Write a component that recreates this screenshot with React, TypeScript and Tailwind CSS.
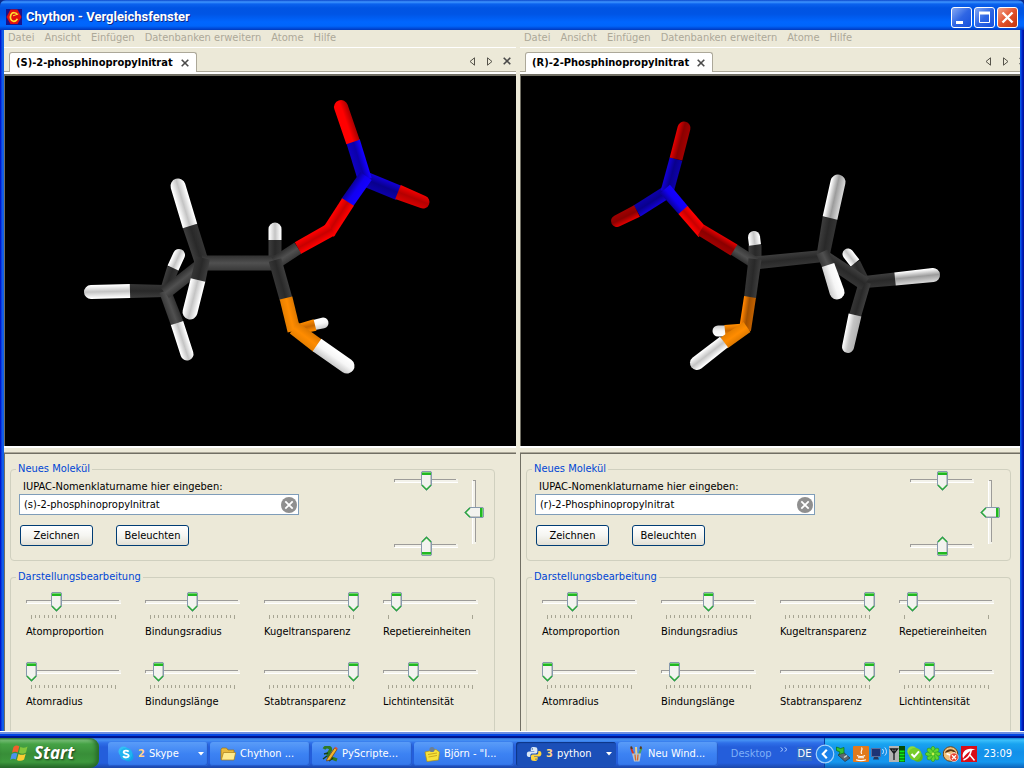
import { useId, useState } from 'react';
import type { ReactNode } from 'react';

/* ---------- Molecule rendering ---------- */

type Shade = [string, string, string];

const SHADES: Record<string, Shade> = {
  carbon: ['#333333', '#505050', '#3a3a3a'],
  carbonDark: ['#3c3c3c', '#292929', '#343434'],
  white: ['#ffffff', '#c4c4c4', '#ffffff'],
  whiteSoft: ['#ffffff', '#f6f6f6', '#cfcfcf'],
  whiteDim: ['#ffffff', '#9c9c9c', '#d4d4d4'],
  whiteDimFlip: ['#b4b4b4', '#c4c4c4', '#ffffff'],
  red: ['#ff0000', '#ff0000', '#b00000'],
  redDark: ['#e00000', '#8a0000', '#a00000'],
  redCore: ['#ff0000', '#c80000', '#ff0000'],
  redSide: ['#f00000', '#b40000', '#d80000'],
  blue: ['#1400ff', '#1200f0', '#0b00a0'],
  blueDark: ['#1200d0', '#09008c', '#0c00a8'],
  blueCore: ['#0e00c0', '#0b00a8', '#1400ff'],
  orange: ['#ff8c00', '#c86800', '#ff8c00'],
  orangeDark: ['#ff8400', '#a05000', '#c06000'],
  orangeLit: ['#e07a00', '#ff8c00', '#e88000'],
};

// x1, y1, x2, y2, width at start, width at end, shade, rounded end
type Stick = [number, number, number, number, number, number, string, boolean?];

const LEFT_STICKS: Stick[] = [
  [165, 291, 173, 268, 10, 12, 'carbonDark'],
  [173, 268, 179, 255, 12, 12, 'white', true],
  [314, 325, 323, 323, 10, 11, 'whiteSoft', true],
  [295, 330, 315, 325, 10, 12, 'orange'],
  [275, 263, 275, 240, 13, 13, 'carbonDark'],
  [275, 240, 275, 229, 13, 13, 'white', true],
  [165, 291, 130, 291, 12, 14, 'carbonDark'],
  [130, 291, 91, 292, 14, 14, 'white', true],
  [165, 291, 177, 323, 12, 13, 'carbon'],
  [177, 323, 187, 354, 13, 13, 'white', true],
  [165, 293, 202, 264, 13, 13, 'carbon'],
  [202, 263, 190, 226, 14, 15, 'carbonDark'],
  [190, 226, 178, 186, 15, 15, 'white', true],
  [202, 263, 275, 263, 15, 15, 'carbon'],
  [203, 258, 198, 281, 14, 15, 'carbonDark'],
  [198, 280, 190, 312, 15, 15, 'white', true],
  [275, 263, 298, 248, 13, 13, 'carbon'],
  [275, 260, 286, 299, 13, 13, 'carbonDark'],
  [286, 298, 294, 331, 13, 13, 'orangeLit'],
  [294, 328, 318, 346, 14, 15, 'orangeLit'],
  [317, 345, 347, 366, 15, 15, 'whiteSoft', true],
  [365, 179, 399, 193, 15, 15, 'blueDark'],
  [398, 192, 423, 202, 15, 13, 'redSide', true],
  [365, 180, 353, 141, 14, 14, 'blueCore'],
  [353, 142, 341, 107, 14, 14, 'red', true],
  [366, 176, 347, 203, 14, 14, 'blue'],
  [348, 202, 328, 233, 14, 14, 'redCore'],
  [332, 229, 298, 248, 14, 13, 'redCore'],
];

const RIGHT_STICKS: Stick[] = [
  [865, 282, 855, 263, 10, 11, 'carbonDark'],
  [855, 263, 848, 254, 11, 11, 'white', true],
  [733, 331, 718, 331, 11, 11, 'whiteSoft', true],
  [745, 329, 725, 331, 11, 12, 'orange'],
  [755, 263, 755, 245, 13, 13, 'carbonDark'],
  [755, 245, 754, 237, 12, 12, 'white', true],
  [865, 282, 895, 279, 12, 13, 'carbonDark'],
  [895, 279, 933, 275, 13, 14, 'whiteDim', true],
  [865, 282, 855, 316, 12, 12, 'carbonDark'],
  [855, 315, 848, 347, 13, 12, 'whiteDimFlip', true],
  [823, 256, 865, 284, 13, 14, 'carbonDark'],
  [755, 263, 823, 256, 13, 12, 'carbonDark'],
  [823, 256, 830, 218, 13, 15, 'carbonDark'],
  [830, 218, 838, 182, 15, 15, 'whiteDim', true],
  [822, 252, 829, 267, 12, 13, 'carbon'],
  [828, 265, 837, 292, 13, 15, 'whiteSoft', true],
  [755, 263, 733, 249, 12, 12, 'carbon'],
  [755, 259, 750, 298, 13, 12, 'carbonDark'],
  [745, 330, 750, 297, 12, 12, 'orangeDark'],
  [747, 327, 724, 343, 12, 13, 'orangeLit'],
  [724, 342, 697, 363, 13, 14, 'white', true],
  [667, 192, 637, 211, 13, 13, 'blueDark'],
  [637, 211, 617, 221, 13, 12, 'redDark', true],
  [667, 192, 676, 159, 13, 13, 'blueDark'],
  [676, 159, 684, 128, 13, 13, 'redDark', true],
  [665, 189, 684, 211, 13, 12, 'blue'],
  [683, 210, 703, 233, 12, 12, 'redCore'],
  [701, 230, 734, 250, 12, 13, 'redDark'],
];

function Molecule({ sticks, originX, label }: { sticks: Stick[]; originX: number; label: string }) {
  const uid = useId();
  return (
    <svg viewBox={`${originX} 76 512 370`} width="512" height="370" role="img" aria-label={label} className="block shrink-0">
      <defs>
        {Object.entries(SHADES).map(([name, [a, b, c]]) => (
          <linearGradient key={name} id={`${uid}${name}`} x1="0" y1="0" x2="0" y2="1">
            <stop offset="0.05" stopColor={a} />
            <stop offset="0.5" stopColor={b} />
            <stop offset="0.95" stopColor={c} />
          </linearGradient>
        ))}
      </defs>
      {sticks.map(([x1, y1, x2, y2, w1, w2, shade, round], i) => {
        const len = Math.hypot(x2 - x1, y2 - y1);
        const angle = (Math.atan2(y2 - y1, x2 - x1) * 180) / Math.PI;
        const r1 = w1 / 2;
        const r2 = w2 / 2;
        const end = round ? `A${r2} ${r2} 0 0 1 ${len} ${r2}` : `L${len} ${r2}`;
        return (
          <path
            key={i}
            transform={`translate(${x1} ${y1}) rotate(${angle})`}
            d={`M0 ${-r1}L${len} ${-r2}${end}L0 ${r1}Z`}
            fill={`url(#${uid}${shade})`}
          />
        );
      })}
    </svg>
  );
}

/* ---------- Sliders ---------- */

type Direction = 'down' | 'up' | 'left';

function SliderArt({ length, ratio, direction }: { length: number; ratio: number; direction: Direction }) {
  const x = Math.round(ratio * (length - 11));
  const vertical = direction === 'left';
  return (
    <svg
      width={vertical ? 20 : length}
      height={vertical ? length : 20}
      className="col-start-1 row-start-1 block"
      aria-hidden="true"
      shapeRendering="crispEdges"
    >
      <g transform={vertical ? 'translate(20 0) rotate(90)' : undefined}>
        <rect x="0" y="8" width={length} height="4" fill="#f3f2ea" />
        <rect x="0" y="8" width={length - 2} height="1" fill="#9d9c99" />
        <rect x="0" y="9" width="1" height="2" fill="#9d9c99" />
        <rect x="1" y="11" width={length - 1} height="1" fill="#ffffff" />
        <g transform={direction === 'up' ? `translate(${x} 20) scale(1 -1)` : `translate(${x} 0)`} shapeRendering="auto">
          <path d="M1 0.5H10L10.5 1V14.5L5.5 19.5L0.5 14.5V1Z" fill="#f3f3ef" stroke="#8799ad" />
          <path d="M9.5 3V14.5L5.5 18.5" fill="none" stroke="#c3c6c4" />
          <path d="M1 1H10V4H1Z" fill="#21b821" />
          <path d="M1 1H10V2H1Z" fill="#6fd46a" />
          <path d="M1 14L5.5 18.5L10 14" fill="none" stroke="#2fae3c" strokeWidth="1.4" />
        </g>
      </g>
    </svg>
  );
}

function Slider({
  id,
  name,
  length,
  initial,
  direction = 'down',
}: {
  id?: string;
  name?: string;
  length: number;
  initial: number;
  direction?: Direction;
}) {
  const [value, setValue] = useState(initial);
  return (
    <div className="grid w-fit">
      <SliderArt length={length} ratio={value / 20} direction={direction} />
      <input
        id={id}
        aria-label={name}
        type="range"
        min={0}
        max={20}
        value={value}
        onChange={(e) => setValue(Number(e.target.value))}
        className={
          direction === 'left'
            ? 'col-start-1 row-start-1 m-0 h-16 w-5 cursor-pointer opacity-0 [writing-mode:vertical-lr]'
            : 'col-start-1 row-start-1 m-0 h-5 w-0 min-w-full cursor-pointer opacity-0'
        }
      />
    </div>
  );
}

function LabelledSlider({ label, value, sparse }: { label: string; value: number; sparse?: boolean }) {
  const id = useId();
  const ticks = Array.from({ length: 21 }, (_, i) => i).filter((i) => !sparse || i % 20 === 0);
  return (
    <div className="w-[95px]">
      <Slider id={id} length={95} initial={value} />
      <svg width="95" height="4" className="mt-[3px] block" shapeRendering="crispEdges" aria-hidden="true">
        {ticks.map((i) => (
          <rect key={i} x={5 + Math.round(i * 4.2)} y="0" width="1" height={i % 20 === 0 ? 4 : 3} fill="#a7a593" />
        ))}
      </svg>
      <label htmlFor={id} className="mt-1.5 block leading-[14px] whitespace-nowrap">
        {label}
      </label>
    </div>
  );
}

/* ---------- Comparison pane ---------- */

const MENU = ['Datei', 'Ansicht', 'Einfügen', 'Datenbanken erweitern', 'Atome', 'Hilfe'];

const SETTINGS = [
  { label: 'Atomproportion', value: 6 },
  { label: 'Bindungsradius', value: 10 },
  { label: 'Kugeltransparenz', value: 20 },
  { label: 'Repetiereinheiten', value: 2, sparse: true },
  { label: 'Atomradius', value: 0 },
  { label: 'Bindungslänge', value: 2 },
  { label: 'Stabtransparenz', value: 20 },
  { label: 'Lichtintensität', value: 6 },
];

function Cross() {
  return (
    <svg width="8" height="8" viewBox="0 0 8 8" className="block" aria-hidden="true">
      <path d="M0.7 0.7L7.3 7.3M7.3 0.7L0.7 7.3" stroke="#4a4a4a" strokeWidth="1.6" />
    </svg>
  );
}

function PushButton({ children }: { children: ReactNode }) {
  return (
    <button
      type="button"
      className="h-[21px] w-[73px] rounded-[3px] border border-[#003c74] bg-linear-to-b from-white via-[#f5f5f1] to-[#e3e0d5] leading-[14px]"
    >
      {children}
    </button>
  );
}

function Pane({ title, query, sticks, originX }: { title: string; query: string; sticks: Stick[]; originX: number }) {
  const inputId = useId();
  const [text, setText] = useState(query);
  return (
    <section className="flex grow flex-col">
      <nav className="flex h-[18px] items-start gap-2.5 border-b border-white pt-px pl-1 leading-[14px] text-[#aca899]">
        {MENU.map((item) => (
          <button key={item} type="button" className="whitespace-nowrap">
            {item}
          </button>
        ))}
      </nav>

      <div className="flex h-6 shrink-0 items-end border-b border-[#aca899] pt-1 pl-[5px]">
        <div className="-mb-px flex h-5 items-center gap-2 rounded-t-[3px] border border-b-0 border-[#aca899] bg-white pr-[7px] pl-1.5">
          <button type="button" className="font-bold leading-[14px] whitespace-nowrap">
            {title}
          </button>
          <button type="button" aria-label="Tab schließen">
            <Cross />
          </button>
        </div>
        <div className="mb-1 ml-auto flex h-3 items-center gap-2.5 pr-1.5">
          <button type="button" aria-label="Vorheriger Tab">
            <svg width="7" height="9" viewBox="0 0 7 9" className="block">
              <path d="M5.5 0.8V8.2L1 4.5Z" fill="none" stroke="#55534a" />
            </svg>
          </button>
          <button type="button" aria-label="Nächster Tab">
            <svg width="7" height="9" viewBox="0 0 7 9" className="block">
              <path d="M1.5 0.8V8.2L6 4.5Z" fill="none" stroke="#55534a" />
            </svg>
          </button>
          <button type="button" aria-label="Schließen">
            <Cross />
          </button>
        </div>
      </div>

      <div className="flex grow flex-col border-y-2 border-white">
        <div className="flex min-h-[372px] grow items-center overflow-hidden border-t-2 border-l border-[#716f64] bg-black">
          <Molecule sticks={sticks} originX={originX} label={title} />
        </div>
      </div>

      <div className="mt-1 border-t border-[#aca899]">
        <div className="border-t border-l border-[#716f64] pt-2 pr-[22px] pl-[5px]">
          <fieldset className="rounded-[4px] border border-[#d0d0bf] pr-2.5 pb-3.5 pl-2">
            <legend className="-ml-[3px] px-0.5 leading-[14px] text-[#0046d5]">Neues Molekül</legend>
            <div className="flex justify-between">
              <div className="w-[280px]">
                <label htmlFor={inputId} className="block pt-1 pl-1 leading-[14px]">
                  IUPAC-Nomenklaturname hier eingeben:
                </label>
                <div className="flex h-[21px] items-center border border-[#7f9db9] bg-white pr-px pl-1">
                  <input
                    id={inputId}
                    value={text}
                    onChange={(e) => setText(e.target.value)}
                    className="min-w-0 grow bg-transparent leading-[14px] outline-none"
                  />
                  <button type="button" aria-label="Eingabe löschen" onClick={() => setText('')}>
                    <svg width="16" height="16" viewBox="0 0 16 16" className="block">
                      <circle cx="8" cy="8" r="8" fill="#8f8f8f" />
                      <path d="M4.3 4.3L11.7 11.7M11.7 4.3L4.3 11.7" stroke="#fff" strokeWidth="1.8" />
                    </svg>
                  </button>
                </div>
                <div className="mt-2.5 flex gap-[23px] pl-px">
                  <PushButton>Zeichnen</PushButton>
                  <PushButton>Beleuchten</PushButton>
                </div>
              </div>
              <div className="-mt-[5px] -mb-2.5 flex gap-1.5">
                <div className="flex flex-col gap-[45px]">
                  <Slider name="Drehung oben" length={64} initial={10} />
                  <Slider name="Drehung unten" length={64} initial={10} direction="up" />
                </div>
                <div className="pt-[9px]">
                  <Slider name="Neigung" length={64} initial={10} direction="left" />
                </div>
              </div>
            </div>
          </fieldset>

          <fieldset className="mt-[9px] rounded-t-[4px] border border-b-0 border-[#d0d0bf] px-[15px] pb-[22px]">
            <legend className="-ml-2.5 px-0.5 leading-[14px] text-[#0046d5]">Darstellungsbearbeitung</legend>
            <div className="grid w-fit grid-cols-4 gap-x-6 gap-y-[23px] pt-2">
              {SETTINGS.map((s) => (
                <LabelledSlider key={s.label} label={s.label} value={s.value} sparse={s.sparse} />
              ))}
            </div>
          </fieldset>
        </div>
      </div>
    </section>
  );
}

/* ---------- Window frame ---------- */

function TitleButton({ label, danger, children }: { label: string; danger?: boolean; children: ReactNode }) {
  return (
    <button
      type="button"
      aria-label={label}
      className={
        danger
          ? 'size-[21px] rounded-[3px] border border-white bg-linear-to-br from-[#f0a088] via-[#e3522b] to-[#bf3409]'
          : 'size-[21px] rounded-[3px] border border-white bg-linear-to-br from-[#86a8f2] via-[#2f66e4] to-[#1650dc]'
      }
    >
      <svg width="19" height="19" viewBox="0 0 19 19" fill="none" stroke="#fff" className="block">
        {children}
      </svg>
    </button>
  );
}

function TitleBar() {
  return (
    <header className="flex h-[30px] shrink-0 items-center rounded-t-[6px] bg-[linear-gradient(#0a47cc_0px,#3f96ff_2px,#0b62ee_4px,#0054e3_8px,#0055e5_14px,#0066ff_22px,#0065fb_26px,#0043cf_29px,#0038b8_30px)] px-1.5 pt-1">
      <svg width="16" height="16" viewBox="0 0 16 16" className="mr-1 shrink-0" aria-hidden="true">
        <rect width="16" height="16" fill="#18128c" />
        <path d="M4.5 0.5L11.5 0.5L15.5 8L11.5 15L4.5 15L0.5 8Z" fill="#e01010" />
        <path d="M11.2 5.6C10 3.2 6.4 3 5 5.6C3.6 8.6 4.7 12 7.6 12.3C9.4 12.4 10.7 11.5 11.3 9.8" fill="none" stroke="#ffe030" strokeWidth="1.7" />
        <path d="M7 6.8L12.3 5" stroke="#ffe030" />
      </svg>
      <h1 className="grow font-['Roboto',sans-serif] text-[13px] leading-4 font-bold text-white [text-shadow:1px_1px_#0a2a8c]">
        Chython - Vergleichsfenster
      </h1>
      <div className="flex gap-0.5">
        <TitleButton label="Minimieren">
          <path d="M4 14.5H11" strokeWidth="3" />
        </TitleButton>
        <TitleButton label="Maximieren">
          <path d="M4.5 5V14.5H14.5V5" />
          <path d="M4 5H15" strokeWidth="3" />
        </TitleButton>
        <TitleButton label="Fenster schließen" danger>
          <path d="M4.5 4.5L14.5 14.5M14.5 4.5L4.5 14.5" strokeWidth="2.4" />
        </TitleButton>
      </div>
    </header>
  );
}

/* ---------- Taskbar ---------- */

const icons = {
  skype: (
    <>
      <circle cx="5.5" cy="5.5" r="5" fill="#35c0f5" />
      <circle cx="10.5" cy="10.5" r="5" fill="#12a5e8" />
      <circle cx="8" cy="8" r="6.3" fill="#20b4f0" />
      <path d="M10.7 5.7C9.5 4.3 5.8 4.2 5.6 6.1C5.4 8.2 10.8 7.4 10.7 9.8C10.6 12 6.2 12 5.2 10" fill="none" stroke="#fff" strokeWidth="1.8" />
    </>
  ),
  folder: (
    <>
      <path d="M1 3.5L2 2H6.5L8 4H14V13.5H1Z" fill="#e8b93c" stroke="#9b7415" strokeWidth="0.7" />
      <path d="M3.5 6.5H15.7L14 14H1.3Z" fill="#ffeb8c" stroke="#a67c18" strokeWidth="0.7" />
    </>
  ),
  lizard: (
    <>
      <path d="M2 3C4-0.5 9 1 8.5 4L6 8L7 11L15 14" fill="none" stroke="#2f7a24" strokeWidth="3.2" />
      <path d="M1 13L5 10M2 8L6 7M7 15L11 12" stroke="#173f16" strokeWidth="1.5" />
      <path d="M5 13L12.5 2L15 3.5L8 14L4.5 15Z" fill="#f4b32c" stroke="#6b3c06" strokeWidth="0.7" />
      <path d="M12.5 2L13.5 0.7L15.8 2.2L15 3.5Z" fill="#e05040" />
    </>
  ),
  note: (
    <>
      <path d="M1 6L12 3.5L15.5 6L14.5 14L3 15.5Z" fill="#f7e23c" stroke="#b08f10" strokeWidth="0.7" />
      <path d="M4 8.5L13 7M4.5 11L13 9.5" stroke="#cda91a" />
      <circle cx="8" cy="3.5" r="2.6" fill="#6c8094" />
    </>
  ),
  python: (
    <>
      <path d="M7.8 1C4.8 1 4.8 2.5 4.8 3.7V5H8.3V5.6H3.2C1.4 5.6 0.8 7 0.8 8.3C0.8 10 1.5 11 3 11H4.3V9.3C4.3 8 5.3 7.4 6.4 7.4H9.7C10.8 7.4 11.4 6.5 11.4 5.6V3.5C11.4 1.8 10.5 1 7.8 1Z" fill="#dbe8f5" />
      <circle cx="6.3" cy="2.9" r="0.7" fill="#1d4b94" />
      <path d="M8.6 15C11.6 15 11.6 13.5 11.6 12.3V11H8.1V10.4H13.1C14.8 10.4 15.4 9 15.4 7.7C15.4 6 14.7 5 13.3 5H12.3V6.7C12.3 8 11.3 8.6 10.2 8.6H6.7C5.6 8.6 5 9.5 5 10.4V12.5C5 14.2 5.9 15 8.6 15Z" fill="#ffd43b" />
      <circle cx="10" cy="13.1" r="0.7" fill="#1d4b94" />
    </>
  ),
  brushes: (
    <>
      <path d="M3 2L6.5 11" stroke="#d33a22" strokeWidth="2" />
      <path d="M8 1L8.5 11" stroke="#e9d089" strokeWidth="2" />
      <path d="M13.5 2L10 11" stroke="#4ca24e" strokeWidth="2" />
      <path d="M3 0.5L4 3M13 0.5L12.5 3" stroke="#5b3a1e" strokeWidth="2" />
      <path d="M4 7.5H13L11.5 15.5H6Z" fill="#b6c3cf" />
      <path d="M7 8.5L7.7 14.5M10 8.5L9.5 14.5" stroke="#d96a24" strokeWidth="1.3" />
    </>
  ),
};

function TaskButton({ icon, count, label, active, menu }: { icon: ReactNode; count?: string; label: string; active?: boolean; menu?: boolean }) {
  return (
    <button
      type="button"
      className={
        active
          ? 'flex h-6 min-w-0 flex-[0_1_100px] items-center rounded-[3px] bg-[#1b4fb8] pr-1 pl-2.5 text-white shadow-[inset_1px_1px_1px_#0d3585]'
          : 'flex h-6 min-w-0 flex-[0_1_100px] items-center rounded-[3px] bg-linear-to-b from-[#5a9cf8] via-[#3c82f3] to-[#3477ea] pr-1 pl-2.5 text-white shadow-[inset_-1px_-1px_1px_#2458c8]'
      }
    >
      <svg width="16" height="16" viewBox="0 0 16 16" className="mr-1 shrink-0" aria-hidden="true">
        {icon}
      </svg>
      {count && <span className="mr-1 font-bold text-[#ffd28a]">{count}</span>}
      <span className="whitespace-nowrap">{label}</span>
      {menu && (
        <svg width="6" height="4" viewBox="0 0 6 4" className="ml-auto shrink-0" aria-hidden="true">
          <path d="M0 0H6L3 3.5Z" fill="#fff" />
        </svg>
      )}
    </button>
  );
}

const TRAY: { name: string; art: ReactNode }[] = [
  {
    name: 'Hardware entfernen',
    art: (
      <>
        <path d="M3 9L10 15.5L15 12L8 6Z" fill="#5b6770" stroke="#273038" strokeWidth="0.7" />
        <path d="M9 11.5L12 9.5" stroke="#d4dadd" strokeWidth="1.5" />
        <path d="M1.5 1L5.5 2.5L9 1.5V7L4 8.5L5 6L1.5 4.5Z" fill="#35c436" stroke="#0d6c18" strokeWidth="0.7" />
      </>
    ),
  },
  {
    name: 'Java',
    art: (
      <>
        <rect width="16" height="16" rx="1" fill="#e27a1c" />
        <path d="M8.5 1.5C10.5 4 6.5 5 8.8 8M4 9.5C6 10.8 10 10.8 12 9.5M5 11.8H11M3 13.8C6 14.8 10 14.8 13 13.8" fill="none" stroke="#fff" strokeWidth="1.1" />
      </>
    ),
  },
  {
    name: 'Netzwerk',
    art: (
      <>
        <path d="M0.5 2.5H9.5V10.5H0.5Z" fill="#1d3476" stroke="#5c6f9c" />
        <path d="M2 13.5H8L7 11H3Z" fill="#27365c" />
        <path d="M11.5 3C12.8 4.5 12.8 6.5 11.5 8M13.8 1.5C16 4 16 7.5 13.8 9.5" fill="none" stroke="#d6e8ff" />
      </>
    ),
  },
  {
    name: 'Funksignal',
    art: (
      <>
        <rect width="10" height="16" fill="#b4b4b4" />
        <path d="M1.5 3H8.5L5 7.5ZM5 3V14" fill="none" stroke="#16181c" strokeWidth="1.3" />
        <rect x="10" width="6" height="16" fill="#044a04" />
        <path d="M10.5 5.5H15.5M10.5 8.5H15.5M10.5 11.5H15.5M10.5 14.5H15.5" stroke="#10e818" strokeWidth="2" />
      </>
    ),
  },
  {
    name: 'Skype',
    art: (
      <>
        <circle cx="5.3" cy="5.3" r="5" fill="#8fdc39" />
        <circle cx="11" cy="11" r="4.8" fill="#5fb81a" />
        <circle cx="8" cy="8" r="6.3" fill="#77cc29" />
        <path d="M4.5 8L7.2 10.8L12 5.3" fill="none" stroke="#fff" strokeWidth="2" />
      </>
    ),
  },
  {
    name: 'ICQ',
    art: (
      <>
        <g fill="#62d532" stroke="#188b18" strokeWidth="0.5">
          {[0, 45, 90, 135, 180, 225, 270, 315].map((a) => (
            <ellipse key={a} cx="8" cy="3.8" rx="2.1" ry="3.5" transform={`rotate(${a} 8 8)`} />
          ))}
        </g>
        <circle cx="8" cy="8" r="1.4" fill="#c8f04a" />
      </>
    ),
  },
  {
    name: 'Messenger',
    art: (
      <>
        <circle cx="7.5" cy="8" r="7.3" fill="#f0c07c" stroke="#6d4214" />
        <path d="M2 7C3 2 12 2 13 7L8 5Z" fill="#5a3412" />
        <path d="M3.5 7.5L7 9M12 7L8.5 9" stroke="#fff" strokeWidth="1.6" />
        <circle cx="11" cy="11.2" r="4.3" fill="#e8412b" stroke="#fff" strokeWidth="0.6" />
        <path d="M9 9.2L13 13.2M13 9.2L9 13.2" stroke="#fff" strokeWidth="1.3" />
      </>
    ),
  },
  {
    name: 'Antivirus',
    art: (
      <>
        <rect width="16" height="16" fill="#d90d16" />
        <path d="M2 12.5C0 5 6 1 14.5 3.5C10.5 4 6 6 2 12.5Z" fill="#fff" />
        <path d="M2.5 14C6.5 12.5 9.5 8.5 10.5 3.5M8.5 8.5L13.5 14.5" fill="none" stroke="#fff" strokeWidth="1.5" />
      </>
    ),
  },
];

function Taskbar() {
  return (
    <footer className="flex h-[30px] shrink-0 bg-[linear-gradient(#2a6bd8_0px,#4792f4_2px,#2e6fe8_5px,#245edb_9px,#245edb_25px,#1b46a8_30px)] leading-[14px]">
      <button
        type="button"
        className="flex w-[99px] shrink-0 items-center gap-1 rounded-r-[9px] bg-[linear-gradient(#338036_0px,#7cc47c_2px,#45a245_6px,#388e38_16px,#3d983d_24px,#25682a_30px)] pl-2.5 font-['Open_Sans',sans-serif] text-[17px] leading-5 font-bold text-white italic shadow-[inset_-3px_0_4px_#276a29] [text-shadow:1px_1px_2px_#1d3d1c]"
      >
        <svg width="20" height="18" viewBox="0 0 20 18" aria-hidden="true">
          <path d="M3.5 3C5.5 1.2 7.5 1.2 9.3 2.3L7.7 8.4C5.8 7.3 4 7.5 2 8.8Z" fill="#f2602c" />
          <path d="M10.4 2.8C12.6 4.2 15 3.9 17.5 2.4L16 8.5C13.6 10 11.3 10 8.9 8.8Z" fill="#82c63c" />
          <path d="M1.7 10C3.8 8.6 5.7 8.6 7.4 9.6L5.8 15.5C4 14.5 2.1 14.6 0.2 15.9Z" fill="#4b93ee" />
          <path d="M8.5 10C10.8 11.2 13 11.2 15.7 9.7L14.1 15.6C11.5 17.3 9 17 6.9 15.9Z" fill="#fbcd33" />
        </svg>
        Start
      </button>
      <div className="flex min-w-0 grow items-center gap-0.5 pt-0.5 pl-[9px]">
        <TaskButton icon={icons.skype} count="2" label="Skype" menu />
        <TaskButton icon={icons.folder} label="Chython ..." />
        <TaskButton icon={icons.lizard} label="PyScripte..." />
        <TaskButton icon={icons.note} label={'Björn - "I...'} />
        <TaskButton icon={icons.python} count="3" label="python" active menu />
        <TaskButton icon={icons.brushes} label="Neu Wind..." />
      </div>
      <div className="flex shrink-0 items-center pt-0.5">
        <button type="button" className="text-[#7fb0f8]">
          Desktop
        </button>
        <button type="button" aria-label="Weitere Symbole" className="mb-2.5 ml-2 text-[#a9cbff]">
          <svg width="9" height="5" viewBox="0 0 9 5" fill="none" stroke="currentColor" className="block">
            <path d="M0.5 0.3L3 2.5L0.5 4.7M4.5 0.3L7 2.5L4.5 4.7" />
          </svg>
        </button>
        <button type="button" className="mr-3 ml-2 bg-[#316ac5] px-px text-white">
          DE
        </button>
      </div>
      <div className="flex shrink-0 items-center border-l border-[#0a3c9e] bg-[linear-gradient(#1280d8_0px,#3cc0fb_2px,#18a3f0_6px,#1290e9_14px,#1597ee_24px,#0d62b8_30px)] pt-0.5 pr-3 text-white">
        <button type="button" aria-label="Ausgeblendete Symbole anzeigen" className="-ml-2.5">
          <svg width="20" height="20" viewBox="0 0 20 20" className="block">
            <circle cx="10" cy="10" r="8.8" fill="#1c82ea" stroke="#a5d2fb" strokeWidth="1.2" />
            <path d="M11.8 5.8L7.8 10L11.8 14.2" fill="none" stroke="#fff" strokeWidth="2.2" />
          </svg>
        </button>
        <div className="flex gap-0.5">
          {TRAY.map((t) => (
            <svg key={t.name} width="16" height="16" viewBox="0 0 16 16" role="img" aria-label={t.name}>
              {t.art}
            </svg>
          ))}
        </div>
        <time className="ml-1.5">23:09</time>
      </div>
    </footer>
  );
}

export default function App() {
  return (
    <div className="flex min-h-screen flex-col bg-[#0a2a8c] font-['DejaVu_Sans_Condensed','DejaVu_Sans',sans-serif] text-[11px] text-black">
      <TitleBar />
      <main className="flex grow flex-col bg-[linear-gradient(90deg,#0019cf_1px,#0831d9_1px,#166aee_3px,#0855dd_4px,#0855dd_calc(100%-3px),#001dd0_calc(100%-2px),#00138c_100%)] px-1">
        <div className="grid grow grid-cols-[512fr_4px_500fr] bg-[#ece9d8]">
          <div className="flex overflow-hidden">
            <Pane title="(S)-2-phosphinopropylnitrat" query="(s)-2-phosphinopropylnitrat" sticks={LEFT_STICKS} originX={5} />
          </div>
          <div />
          <div className="flex overflow-hidden">
            <div className="flex w-[calc(100%+12px)] shrink-0">
              <Pane title="(R)-2-Phosphinopropylnitrat" query="(r)-2-Phosphinopropylnitrat" sticks={RIGHT_STICKS} originX={521} />
            </div>
          </div>
        </div>
      </main>
      <div className="h-[7px] shrink-0 bg-[linear-gradient(#ffffff_0px,#ffffff_1px,#6f8fe0_1px,#6f8fe0_3px,#0046e8_3px,#0040dc_5px,#001590_5px,#001590_7px)]" />
      <Taskbar />
    </div>
  );
}
